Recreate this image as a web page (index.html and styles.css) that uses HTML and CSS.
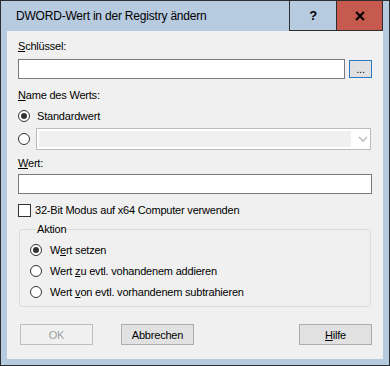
FILE: index.html
```html
<!DOCTYPE html>
<html lang="de">
<head>
<meta charset="utf-8">
<title>DWORD-Wert in der Registry ändern</title>
<link rel="stylesheet" href="styles.css">
</head>
<body>
<div class="window">
  <div class="titlebar">
    <div class="title">DWORD-Wert in der Registry ändern</div>
    <div class="tb-btn help">?</div>
    <div class="tb-btn close">
      <svg width="10" height="10" viewBox="0 0 10 10"><path d="M1 1 L9 9 M9 1 L1 9" stroke="#000" stroke-width="2"/></svg>
    </div>
  </div>
  <div class="client">
    <div class="label"><u>S</u>chlüssel:</div>
    <div class="key-row">
      <div class="textbox key"></div>
      <div class="btn browse">...</div>
    </div>
    <div class="label name-label"><u>N</u>ame des Werts:</div>
    <div class="opt row1"><span class="radio checked"></span><span>Standardwert</span></div>
    <div class="opt row2">
      <span class="radio"></span>
      <div class="combo">
        <div class="combo-field"></div>
        <svg class="chev" width="10" height="6" viewBox="0 0 10 6"><path d="M1 1 L5 5 L9 1" stroke="#bfbfbf" stroke-width="1.6" fill="none"/></svg>
      </div>
    </div>
    <div class="label wert-label"><u>W</u>ert:</div>
    <div class="textbox wert"></div>
    <div class="opt check-row"><span class="checkbox"></span><span>32-Bit Modus auf x64 Computer verwenden</span></div>
    <fieldset class="group">
      <legend>Aktion</legend>
      <div class="opt g"><span class="radio checked"></span><span>W<u>e</u>rt setzen</span></div>
      <div class="opt g"><span class="radio"></span><span>Wert <u>z</u>u evtl. vohandenem addieren</span></div>
      <div class="opt g"><span class="radio"></span><span>Wert <u>v</u>on evtl. vorhandenem subtrahieren</span></div>
    </fieldset>
    <div class="buttons">
      <div class="btn push disabled">OK</div>
      <div class="btn push">Abbrechen</div>
      <div class="spacer"></div>
      <div class="btn push"><u>H</u>ilfe</div>
    </div>
  </div>
</div>
</body>
</html>
```
FILE: styles.css
```css
* { box-sizing: border-box; }
html, body { margin: 0; padding: 0; }
body {
  width: 390px;
  height: 366px;
  overflow: hidden;
  font-family: "Liberation Sans", Arial, sans-serif;
  font-size: 11px;
  letter-spacing: -0.2px;
  color: #000;
}
.window {
  width: 390px;
  height: 366px;
  border: 1px solid #2e2e2e;
  background: #b7cbe0;
  display: flex;
  flex-direction: column;
  padding: 0 6px 6px 6px;
}
.titlebar {
  height: 30px;
  display: flex;
  align-items: stretch;
  margin: 0 -6px 0 -6px;
  padding-right: 6px;
}
.title {
  flex: 1;
  font-family: "Liberation Sans", Arial, sans-serif;
  font-size: 12px;
  letter-spacing: -0.2px;
  padding-left: 15px;
  line-height: 30px;
  color: #000;
}
.tb-btn {
  width: 47px;
  border-left: 1px solid #2e2e2e;
  border-bottom: 1px solid #2e2e2e;
  display: flex;
  align-items: center;
  justify-content: center;
}
.help {
  font-family: "Liberation Sans", Arial, sans-serif;
  font-weight: bold;
  font-size: 13px;
}
.close {
  background: #c75a4f;
  border-right: 1px solid #2e2e2e;
}
.client {
  flex: 1;
  background: #f0f0f0;
  padding: 9px 9px 0 11px;
  display: flex;
  flex-direction: column;
}
.label { line-height: 13px; height: 13px; }
.key-row {
  display: flex;
  align-items: center;
  margin-top: 6px;
  gap: 4px;
}
.textbox {
  height: 20px;
  border: 1px solid #7a7a7a;
  background: #fff;
}
.key { width: 327px; }
.btn {
  background: #e1e1e1;
  border: 1px solid #adadad;
  display: flex;
  align-items: center;
  justify-content: center;
}
.browse {
  width: 23px;
  height: 18px;
  border-color: #2a79c1;
  align-items: flex-end;
  line-height: 11px;
  padding-bottom: 2px;
}
.name-label { margin-top: 10px; }
.opt {
  display: flex;
  align-items: center;
  gap: 7px;
  line-height: 13px;
}
.row1 { height: 16px; margin-top: 6px; }
.row2 { margin-top: 4px; gap: 6px; }
.radio {
  width: 12px;
  height: 12px;
  border: 1px solid #333;
  border-radius: 50%;
  background: #fff;
  display: flex;
  align-items: center;
  justify-content: center;
  flex: none;
}
.radio.checked::after {
  content: "";
  width: 6px;
  height: 6px;
  border-radius: 50%;
  background: #333;
}
.combo {
  width: 335px;
  height: 22px;
  border: 1px solid #bcbcbc;
  background: #fff;
  display: flex;
  align-items: center;
  padding: 2px;
}
.combo-field {
  width: 312px;
  height: 16px;
  background: #f0f0f0;
}
.chev { margin-left: 7px; }
.wert-label { margin-top: 7px; }
.wert { margin-top: 4px; width: 354px; }
.check-row { height: 16px; margin-top: 8px; gap: 4px; }
.checkbox {
  width: 13px;
  height: 13px;
  border: 1px solid #333;
  background: #fff;
  flex: none;
}
.group {
  margin: 5px 0 0 1px;
  width: 352px;
  border: 1px solid #dcdcdc;
  border-radius: 3px;
  padding: 4px 0 6px 10px;
  min-width: 0;
}
.group legend {
  margin-left: 6px;
  padding: 0 1px;
  line-height: 13px;
}
.opt.g { height: 16px; margin-top: 5px; gap: 8px; }
.opt.g:first-of-type { margin-top: 2px; }
.buttons {
  display: flex;
  margin-top: 17px;
  padding-left: 2px;
  padding-right: 2px;
}
.push {
  width: 73px;
  height: 21px;
  border-color: #adadad;
}
.push + .push { margin-left: 28px; }
.disabled {
  color: #a0a0a0;
  border-color: #bfbfbf;
  background: #f0f0f0;
}
.spacer { flex: 1; }
```
